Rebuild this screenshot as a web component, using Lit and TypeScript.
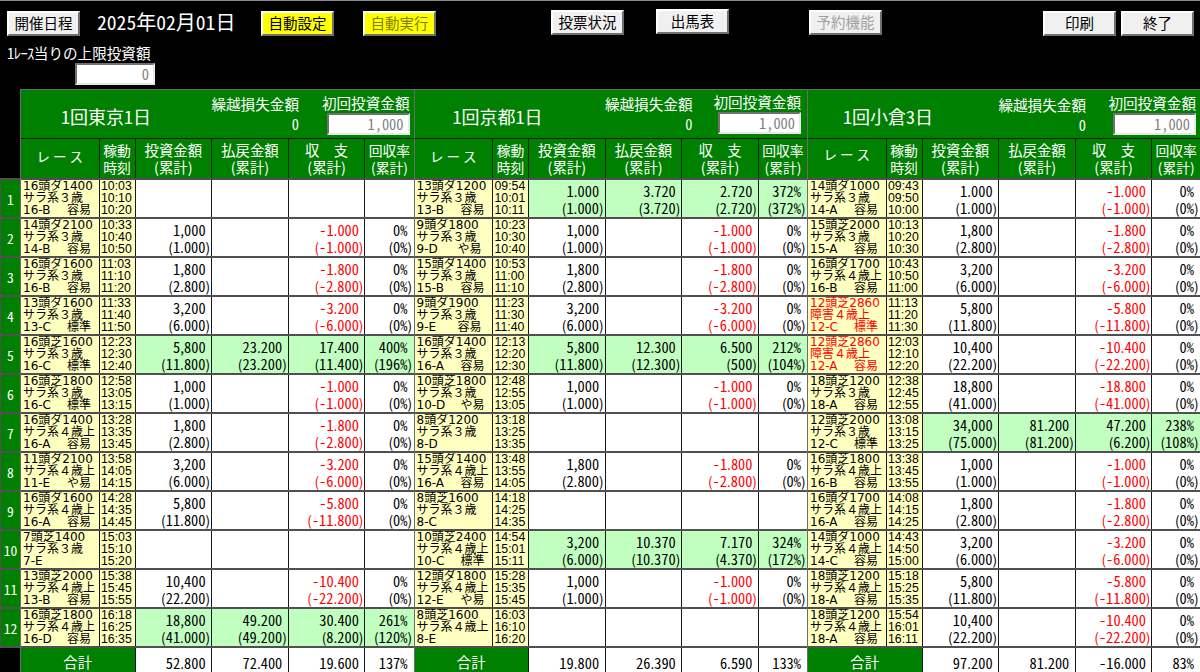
import { LitElement, html, css, nothing } from "lit";
import { customElement, property } from "lit/decorators.js";

type Race = { name: string; cls: string; code: string; level: string; times: string[]; jump?: boolean; v?: string[] };

const parse = (src: string): Race[] =>
  src.trim().split("\n").map((line) => {
    const p = line.trim().split("|");
    return {
      name: p[0],
      cls: p[1],
      code: p[2],
      level: p[3],
      times: p[4].split(" "),
      jump: p[1].startsWith("障害"),
      v: p[5] ? p[5].split(" ") : undefined,
    };
  });

const tokyo = parse(`
16頭ダ1400|サラ系3歳|16-B|容易|10:03 10:10 10:20|
14頭ダ2100|サラ系3歳|14-B|容易|10:33 10:40 10:50|1,000 (1.000) _ _ -1.000 (-1.000) 0% (0%)
16頭ダ1600|サラ系3歳|16-B|容易|11:03 11:10 11:20|1,800 (2.800) _ _ -1.800 (-2.800) 0% (0%)
13頭ダ1600|サラ系3歳|13-C|標準|11:33 11:40 11:50|3,200 (6.000) _ _ -3.200 (-6.000) 0% (0%)
16頭芝1600|サラ系3歳|16-C|標準|12:23 12:30 12:40|5,800 (11.800) 23.200 (23.200) 17.400 (11.400) 400% (196%)
16頭芝1800|サラ系3歳|16-C|標準|12:58 13:05 13:15|1,000 (1.000) _ _ -1.000 (-1.000) 0% (0%)
16頭ダ1400|サラ系4歳上|16-A|容易|13:28 13:35 13:45|1,800 (2.800) _ _ -1.800 (-2.800) 0% (0%)
11頭ダ2100|サラ系4歳上|11-E|や易|13:58 14:05 14:15|3,200 (6.000) _ _ -3.200 (-6.000) 0% (0%)
16頭ダ1600|サラ系4歳上|16-A|容易|14:28 14:35 14:45|5,800 (11.800) _ _ -5.800 (-11.800) 0% (0%)
7頭芝1400|サラ系3歳|7-E||15:03 15:10 15:20|
13頭芝2000|サラ系4歳上|13-B|容易|15:38 15:45 15:55|10,400 (22.200) _ _ -10.400 (-22.200) 0% (0%)
16頭芝1800|サラ系4歳上|16-D|容易|16:18 16:25 16:35|18,800 (41.000) 49.200 (49.200) 30.400 (8.200) 261% (120%)`);

const kyoto = parse(`
13頭ダ1200|サラ系3歳|13-B|容易|09:54 10:01 10:11|1.000 (1.000) 3.720 (3.720) 2.720 (2.720) 372% (372%)
9頭ダ1800|サラ系3歳|9-D|や易|10:23 10:30 10:40|1,000 (1.000) _ _ -1.000 (-1.000) 0% (0%)
15頭ダ1400|サラ系3歳|15-B|容易|10:53 11:00 11:10|1,800 (2.800) _ _ -1.800 (-2.800) 0% (0%)
9頭ダ1900|サラ系3歳|9-E|容易|11:23 11:30 11:40|3,200 (6.000) _ _ -3.200 (-6.000) 0% (0%)
16頭ダ1400|サラ系3歳|16-A|容易|12:13 12:20 12:30|5,800 (11.800) 12.300 (12.300) 6.500 (500) 212% (104%)
10頭芝1800|サラ系3歳|10-D|や易|12:48 12:55 13:05|1,000 (1.000) _ _ -1.000 (-1.000) 0% (0%)
8頭ダ1200|サラ系3歳|8-D||13:18 13:25 13:35|
15頭ダ1400|サラ系4歳上|16-A|容易|13:48 13:55 14:05|1,800 (2.800) _ _ -1.800 (-2.800) 0% (0%)
8頭芝1600|サラ系3歳|8-C||14:18 14:25 14:35|
10頭芝2400|サラ系4歳上|10-C|標準|14:54 15:01 15:11|3,200 (6.000) 10.370 (10.370) 7.170 (4.370) 324% (172%)
12頭ダ1800|サラ系4歳上|12-E|や易|15:28 15:35 15:45|1,000 (1.000) _ _ -1.000 (-1.000) 0% (0%)
8頭芝1600|サラ系4歳上|8-E||16:03 16:10 16:20|`);

const kokura = parse(`
14頭ダ1000|サラ系3歳|14-A|容易|09:43 09:50 10:00|1.000 (1.000) _ _ -1.000 (-1.000) 0% (0%)
15頭芝2000|サラ系3歳|15-A|容易|10:13 10:20 10:30|1,800 (2.800) _ _ -1.800 (-2.800) 0% (0%)
16頭ダ1700|サラ系4歳上|16-B|容易|10:43 10:50 11:00|3,200 (6.000) _ _ -3.200 (-6.000) 0% (0%)
12頭芝2860|障害4歳上|12-C|標準|11:13 11:20 11:30|5,800 (11.800) _ _ -5.800 (-11.800) 0% (0%)
12頭芝2860|障害4歳上|12-A|容易|12:03 12:10 12:20|10,400 (22.200) _ _ -10.400 (-22.200) 0% (0%)
18頭芝1200|サラ系3歳|18-A|容易|12:38 12:45 12:55|18,800 (41.000) _ _ -18.800 (-41.000) 0% (0%)
12頭芝2000|サラ系3歳|12-C|標準|13:08 13:15 13:25|34,000 (75.000) 81.200 (81.200) 47.200 (6.200) 238% (108%)
16頭芝1800|サラ系4歳上|16-B|容易|13:38 13:45 13:55|1,000 (1.000) _ _ -1.000 (-1.000) 0% (0%)
16頭ダ1700|サラ系4歳上|16-A|容易|14:08 14:15 14:25|1,800 (2.800) _ _ -1.800 (-2.800) 0% (0%)
14頭ダ1000|サラ系4歳上|14-C|容易|14:43 14:50 15:00|3,200 (6.000) _ _ -3.200 (-6.000) 0% (0%)
18頭芝1200|サラ系4歳上|18-A|容易|15:18 15:25 15:35|5,800 (11.800) _ _ -5.800 (-11.800) 0% (0%)
18頭芝1200|サラ系4歳上|18-A|容易|15:54 16:01 16:11|10,400 (22.200) _ _ -10.400 (-22.200) 0% (0%)`);

/* Digits are set half width; separators and brackets keep their own narrow width. */
const num = (s: string) =>
  s.split(/([.,()])/).filter(Boolean).map((p) => (/[.,()]/.test(p) ? html`<span class="p">${p}</span>` : p));

const shared = css`
  * { box-sizing: border-box; }
  .num { font-size: 14.4px; font-feature-settings: "hwid"; white-space: nowrap; }
  .p { font-feature-settings: normal; font-size: 13.6px; }
  .field {
    background: #fff; color: #808080; text-align: right;
    border: 2px solid; border-color: #707070 #e8e8e8 #e8e8e8 #707070;
  }
`;

@customElement("venue-table")
export class VenueTable extends LitElement {
  @property() name = "";
  @property({ attribute: false }) races: Race[] = [];
  @property({ attribute: false }) total: string[] = [];

  static styles = [shared, css`
    :host { display: block; border-left: 1px solid #6c6c6c; }
    .head {
      height: 50px; background: #008000; color: #fff; display: flex;
      border-top: 1px solid #6c6c6c; border-bottom: 1px solid #001800;
      white-space: nowrap; position: relative;
    }
    .title { width: 190px; padding: 11px 0 0 var(--title-x, 40px); font-size: 18px; line-height: 30px; }
    .title span { font-feature-settings: "hwid"; }
    .carry { width: 88px; font-size: 14.6px; line-height: 20px; padding-top: var(--carry-y, 4px); text-align: right; }
    .first { width: 93px; font-size: 14.6px; line-height: 20px; padding: var(--first-y, 3px) 0 0; margin-left: auto; margin-right: var(--first-r, 4px); }
    .first .label { text-align: right; }
    .first .field { width: 83px; height: 22px; line-height: 17px; padding-right: 4px; margin-left: auto; }
    .row { display: grid; grid-template-columns: 77.5px 36px 76.6px 76.7px 76.7px 1fr; height: 39px; }
    .cols { height: 39px; background: #008000; color: #fff; font-size: 14.4px; line-height: 16.6px; text-align: center; white-space: pre; }
    .cols > div { border-left: 1px solid #002800; padding-top: 3px; }
    .cols > div:first-child { border-left: 0; padding-top: var(--race-y, 9px); font-size: 13.5px; }
    .cols .half { font-size: 13.8px; }
    .body { border-top: 2px solid #505050; background: #fff; color: #000; }
    .body > div { border-left: 1px solid #181818; }
    .body > div:first-child { border-left: 0; }
    .info, .time { background: #ffffc0; font-size: 12px; line-height: 12.2px; white-space: nowrap; overflow: hidden; }
    .info { padding-left: 2px; font-family: "DejaVu Sans", "Noto Sans CJK JP", sans-serif; }
    .info div { height: 12.2px; }
    .info.jump { color: #f00; }
    .code { display: inline-block; width: 44px; }
    .code.short { width: 41px; }
    .time { padding-left: 1.5px; font-family: "Liberation Sans", sans-serif; font-size: 12.3px; }
    .cell { text-align: right; line-height: 17px; padding-top: 2px; }
    .cell .num { height: 17px; padding-right: 5.5px; }
    .cell .num.acc { padding-right: 1px; }
    .rate .num { padding-right: 6px; }
    .rate .num.acc { padding-right: 1.5px; }
    .hit { background: #c0ffc0; }
    .loss { color: #f00; }
    .sum { grid-template-columns: 113.5px 76.6px 76.7px 76.7px 1fr; }
    .sum .label { background: #008000; color: #fff; font-size: 14.4px; line-height: 28px; text-align: center; }
    .sum .cell { padding-top: 6px; }
  `];

  private cell(r: Race, i: number) {
    const v = r.v;
    const hit = v && v[2] !== "_";
    const a = v?.[i * 2];
    const show = a && a !== "_";
    return html`<div class="cell ${hit ? "hit" : ""} ${show && a.startsWith("-") ? "loss" : ""} ${i === 3 ? "rate" : ""}">
      ${show ? html`<div class="num">${num(a)}</div><div class="num acc">${num(v![i * 2 + 1])}</div>` : nothing}
    </div>`;
  }

  render() {
    return html`
      <div class="head">
        <div class="title">${this.name.split(/(\d)/).map((s) => (/\d/.test(s) ? html`<span>${s}</span>` : s))}</div>
        <div class="carry"><div>繰越損失金額</div><div class="num">0</div></div>
        <div class="first"><div class="label">初回投資金額</div><div class="field num">1,000</div></div>
      </div>
      <div class="row cols">
        <div>レ ー ス</div><div class="half">稼動<br>時刻</div><div>投資金額<br>(累計)</div>
        <div>払戻金額<br>(累計)</div><div>収　支<br>(累計)</div><div class="half">回収率<br>(累計)</div>
      </div>
      ${this.races.map((r) => html`<div class="row body">
        <div class="info ${r.jump ? "jump" : ""}">
          <div>${r.name}</div><div>${r.cls.replace(/\d/, (d) => String.fromCharCode(d.charCodeAt(0) + 0xfee0))}</div>
          <div><span class="code ${r.code.length < 4 ? "short" : ""}">${r.code}</span>${r.level}</div>
        </div>
        <div class="time">${r.times.map((t) => html`<div>${t}</div>`)}</div>
        ${[0, 1, 2, 3].map((i) => this.cell(r, i))}
      </div>`)}
      <div class="row body sum"><div class="label">合計</div>
        ${this.total.map((t, i) => html`<div class="cell ${i === 3 ? "rate" : ""}"><div class="num">${num(t)}</div></div>`)}
      </div>`;
  }
}

@customElement("app-root")
export class AppRoot extends LitElement {
  static styles = [shared, css`
    :host {
      display: block; width: 1200px; height: 672px; overflow: hidden; background: #000;
      font-family: "Noto Sans CJK JP", sans-serif; color: #fff; border-top: 1px solid #8c8c8c;
    }
    .top { height: 88px; }
    .bar { display: flex; height: 42px; padding: 8px 6px 0 7px; align-items: flex-start; }
    .btn {
      width: 73px; height: 25px; background: #f0f0f0; color: #000; font-size: 14.5px; line-height: 20px;
      text-align: center; border: 2px solid; border-color: #fff #707070 #707070 #fff; white-space: nowrap;
    }
    .btn.yellow { background: #ff0; }
    .btn.off { color: #a0a0a0; }
    .btn.yellow.off { color: #808000; }
    .date { font-size: 20px; line-height: 28px; width: 148px; margin: -1px 16px 0 17px; white-space: nowrap; }
    .date span { font-feature-settings: "hwid"; font-size: 19.6px; }
    .set { margin-top: 2px; }
    .run { margin: 2px 0 0 29px; }
    .vote { margin: 1px 0 0 115px; }
    .card { margin-left: 32px; }
    .book { margin: 1px 0 0 80px; }
    .print { margin: 2px 5px 0 auto; }
    .exit { margin-top: 2px; }
    .day { margin-top: 2px; }
    .limit { font-size: 14.6px; line-height: 20px; padding-left: 7px; white-space: nowrap; }
    .limit span { font-feature-settings: "hwid"; letter-spacing: -0.6px; }
    .cap { width: 80px; height: 22px; margin-left: 75px; line-height: 17px; padding-right: 4px; }
    .main { display: grid; grid-template-columns: 20px 393.5px 393.5px 393px; }
    .nums { padding-top: 89px; font-size: 13.6px; text-align: center; }
    .n { height: 39px; border-top: 2px solid #505050; border-left: 1px solid #505050; background: #008000; line-height: 38px; font-feature-settings: "hwid"; }
    .end { border-top: 2px solid #505050; }
    .b { --title-x: 38px; --first-y: 2px; --first-r: 6px; }
    .c { --title-x: 35px; --race-y: 7px; --carry-y: 5px; }
  `];

  render() {
    return html`
      <div class="top">
        <div class="bar">
          <div class="btn day">開催日程</div>
          <div class="date"><span>2025</span>年<span>02</span>月<span>01</span>日</div>
          <div class="btn yellow set">自動設定</div>
          <div class="btn yellow off run">自動実行</div>
          <div class="btn vote">投票状況</div>
          <div class="btn card">出馬表</div>
          <div class="btn off book">予約機能</div>
          <div class="btn print">印刷</div>
          <div class="btn exit">終了</div>
        </div>
        <div class="limit"><span>1ﾚｰｽ</span>当りの上限投資額</div>
        <div class="field num cap">0</div>
      </div>
      <div class="main">
        <div class="nums">${tokyo.map((_, i) => html`<div class="n">${i + 1}</div>`)}<div class="end"></div></div>
        <venue-table name="1回東京1日" .races=${tokyo} .total=${["52.800", "72.400", "19.600", "137%"]}></venue-table>
        <venue-table class="b" name="1回京都1日" .races=${kyoto} .total=${["19.800", "26.390", "6.590", "133%"]}></venue-table>
        <venue-table class="c" name="1回小倉3日" .races=${kokura} .total=${["97.200", "81.200", "-16.000", "83%"]}></venue-table>
      </div>`;
  }
}
